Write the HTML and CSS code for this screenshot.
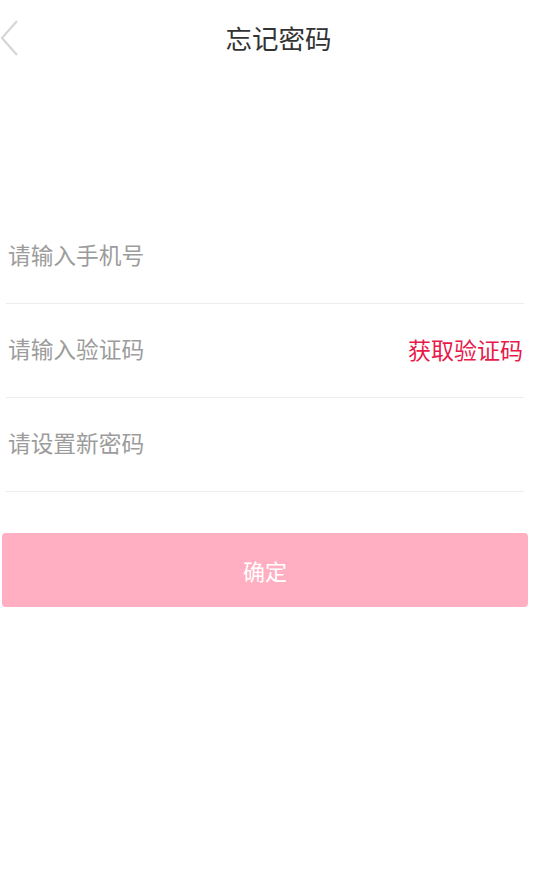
FILE: index.html
```html
<!DOCTYPE html>
<html lang="zh-CN">
<head>
  <meta charset="UTF-8">
  <meta name="viewport" content="width=device-width, initial-scale=1.0">
  <title>忘记密码</title>
  <link rel="stylesheet" href="styles.css">
</head>
<body>

  <!-- Header -->
  <div class="header">
    <a class="back" href="#">
      <svg width="20" height="38" viewBox="0 0 20 38">
        <polyline points="17,2 2,19 17,36" fill="none" stroke="#d6d6d6" stroke-width="2.2"/>
      </svg>
    </a>
    <div class="title">忘记密码</div>
  </div>

  <!-- Form -->
  <div class="form">
    <div class="row">
      <input type="text" placeholder="请输入手机号">
    </div>
    <div class="row">
      <input type="text" placeholder="请输入验证码">
      <span class="get-code">获取验证码</span>
    </div>
    <div class="row">
      <input type="password" placeholder="请设置新密码">
    </div>
  </div>

  <button class="submit">确定</button>

</body>
</html>
```

FILE: styles.css
```css
/* General */
body, html {
  margin: 0;
  padding: 0;
  background-color: #fff;
  font-family: "Noto Sans CJK SC", "Noto Sans", sans-serif;
}

/* Header */
.header {
  height: 80px;
  display: flex;
  align-items: center;
  justify-content: center;
  position: relative;
  padding-left: 24px;
  padding-bottom: 6px;
  box-sizing: border-box;
}

.back {
  position: absolute;
  left: 0;
  top: 19px;
  display: block;
}

.title {
  font-size: 26.5px;
  color: #333;
}

/* Form */
.form {
  margin: 130px 9px 0 6px;
}

.row {
  height: 93px;
  display: flex;
  align-items: center;
  border-bottom: 1px solid #ececec;
  padding: 0 1px 0 2px;
}

.row input {
  flex: 1;
  border: none;
  outline: none;
  font-family: inherit;
  font-size: 22.7px;
  color: #333;
  padding: 0;
  margin-bottom: 4px;
  background: transparent;
}

.row input::placeholder {
  color: #9c9c9c;
}

.get-code {
  font-size: 23px;
  color: #e8194b;
  margin-bottom: 4px;
}

/* Button */
.submit {
  display: block;
  margin: 41px 5px 0 2px;
  width: 526px;
  height: 74px;
  border: none;
  border-radius: 4px;
  background-color: #ffafc1;
  color: #fff;
  font-family: inherit;
  font-size: 22px;
}
```
